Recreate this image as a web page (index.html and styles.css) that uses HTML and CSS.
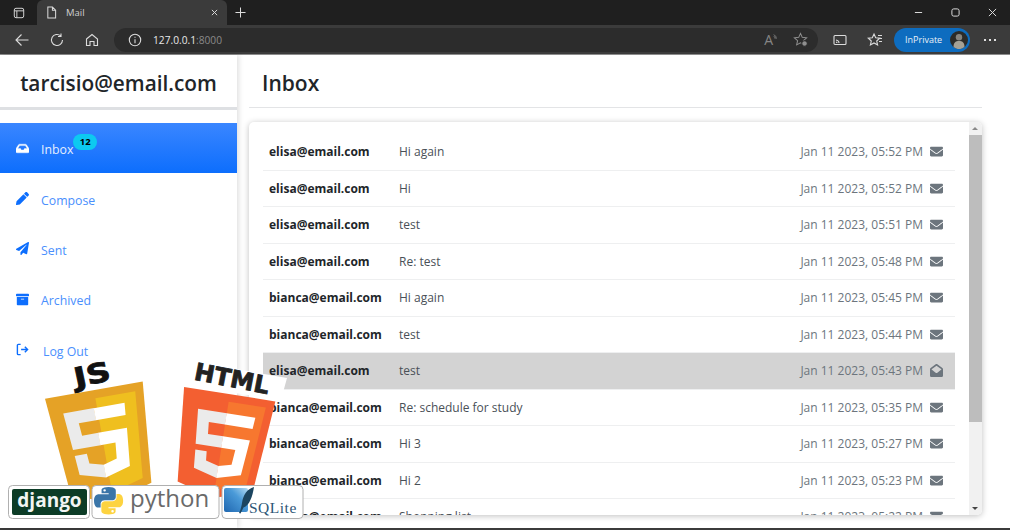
FILE: index.html
```html
<!DOCTYPE html>
<html lang="en">
<head>
    <meta charset="UTF-8">
    <title>Mail</title>
    <link rel="stylesheet" href="styles.css">
</head>
<body>
<div class="tabstrip">
    <svg class="ic tabs-ic" viewBox="0 0 14 14"><rect x="1.500" y="1.500" width="11" height="11" rx="2"/><path d="M1.500 4.500h11M4.500 4.500v8"/></svg>
    <div class="tab">
        <svg class="ic doc-ic" viewBox="0 0 12 14"><path d="M2 1h5l3.500 3.500V13H2zM7 1v3.500h3.500"/></svg>
        <span class="tab-title">Mail</span>
        <svg class="ic tab-x" viewBox="0 0 8 8"><path d="M1 1l6 6M7 1l-6 6"/></svg>
    </div>
    <svg class="ic new-tab" viewBox="0 0 12 12"><path d="M6 .5v11M.5 6h11"/></svg>
    <div class="window-btns">
        <svg class="ic" viewBox="0 0 10 10"><path d="M1 5h8"/></svg>
        <svg class="ic" viewBox="0 0 10 10"><rect x="1" y="1" width="8" height="8" rx="2"/></svg>
        <svg class="ic" viewBox="0 0 10 10"><path d="M1 1l8 8M9 1l-8 8"/></svg>
    </div>
</div>
<div class="toolbar">
    <svg class="ic nav-ic back" viewBox="0 0 14 14"><path d="M13.500 7H1M6.500 1.500L1 7l5.500 5.500"/></svg>
    <svg class="ic nav-ic reload" viewBox="0 0 14 14"><path d="M12.500 7a5.500 5.500 0 1 1-1.800-4.100M11 .5v3H8"/></svg>
    <svg class="ic nav-ic home" viewBox="0 0 14 14"><path d="M1.500 6L7 1.500 12.500 6v6.500H9V8.500H5v4H1.500z"/></svg>
    <div class="address">
        <svg class="ic info" viewBox="0 0 14 14"><circle cx="7" cy="7" r="5.700"/><path d="M7 6.200v4M7 3.800v1"/></svg>
        <span class="url">127.0.0.1<span class="port">:8000</span></span>
        <span class="read-a">A<svg class="ic read-waves" viewBox="0 0 6 8"><path d="M1 1q3 2 3 5M1 3q1.500 1 1.500 3"/></svg></span>
        <svg class="ic star-add" viewBox="0 0 16 16"><path d="M8 1.500l1.900 4.200 4.600.5-3.400 3 1 4.500L8 11.500l-4.100 2.200 1-4.500-3.400-3 4.600-.5z"/><circle class="fill-dim" cx="12.300" cy="12.300" r="3"/></svg>
    </div>
    <svg class="ic cast" viewBox="0 0 14 12"><rect x="1" y="1.500" width="12" height="9" rx="1"/><path d="M3 6q3 .5 3 3M3 8q1 .2 1 1"/></svg>
    <svg class="ic favs" viewBox="0 0 16 16"><path d="M7 2l1.700 3.800 4 .4-3 2.800.9 4-3.600-2.100-3.600 2.100.9-4-3-2.800 4-.4zM11 3.500h4M12.500 6.500h2.500M12 9.500h3"/></svg>
    <div class="inprivate">
        <span>InPrivate</span>
        <svg class="avatar" viewBox="0 0 18 18"><circle cx="9" cy="9" r="9" fill="#2b2b29"/><circle cx="9" cy="6.300" r="3.200" fill="#85847f"/><path d="M3.500 16c0-5 2.500-6 5.500-6s5.500 1 5.500 6a9 9 0 0 1-11 0z" fill="#a5a195"/></svg>
    </div>
    <div class="dots"><i></i><i></i><i></i></div>
</div>

<div class="app">
    <aside class="sidebar">
        <h2 class="account">tarcisio@email.com</h2>
        <nav class="menu">
            <a class="menu-item active">
                <svg class="menu-ic" viewBox="0 0 576 512"><path d="M567.938 243.908L462.250 85.374A48.003 48.003 0 0 0 422.311 64H153.689a48 48 0 0 0-39.938 21.374L8.062 243.908A47.994 47.994 0 0 0 0 270.533V400c0 26.510 21.490 48 48 48h480c26.510 0 48-21.490 48-48V270.533a47.994 47.994 0 0 0-8.062-26.625zM162.252 128h251.497l85.333 128H376l-32 64H232l-32-64H76.918l85.334-128z"/></svg>
                <span class="menu-label">Inbox</span>
                <span class="badge">12</span>
            </a>
            <a class="menu-item">
                <svg class="menu-ic" viewBox="0 0 512 512"><path d="M497.900 142.100l-46.100 46.100c-4.700 4.700-12.300 4.700-17 0l-111-111c-4.700-4.700-4.700-12.300 0-17l46.100-46.100c18.700-18.700 49.100-18.700 67.900 0l60.100 60.100c18.800 18.700 18.800 49.100 0 67.900zM284.200 99.800L21.600 362.400.4 483.900c-2.900 16.400 11.400 30.600 27.800 27.800l121.500-21.300 262.600-262.600c4.700-4.700 4.700-12.300 0-17l-111-111c-4.800-4.700-12.400-4.700-17.100 0z"/></svg>
                <span class="menu-label">Compose</span>
            </a>
            <a class="menu-item">
                <svg class="menu-ic" viewBox="0 0 512 512"><path d="M476 3.200L12.500 270.600c-18.100 10.400-15.800 35.600 2.200 43.200L121 358.400l287.300-253.200c5.500-4.900 13.300 2.600 8.600 8.300L176 407v80.500c0 23.600 28.500 32.900 42.500 15.800L282 426l124.600 52.200c14.200 6 30.400-2.900 33-18.200l72-432C515 7.800 493.300-6.800 476 3.200z"/></svg>
                <span class="menu-label">Sent</span>
            </a>
            <a class="menu-item">
                <svg class="menu-ic" viewBox="0 0 512 512"><path d="M32 448c0 17.700 14.300 32 32 32h384c17.700 0 32-14.300 32-32V160H32v288zm160-212c0-6.600 5.400-12 12-12h104c6.600 0 12 5.400 12 12v8c0 6.600-5.400 12-12 12H204c-6.600 0-12-5.400-12-12v-8zM480 32H32C14.300 32 0 46.300 0 64v48c0 8.800 7.200 16 16 16h480c8.800 0 16-7.200 16-16V64c0-17.700-14.300-32-32-32z"/></svg>
                <span class="menu-label">Archived</span>
            </a>
            <a class="menu-item">
                <svg class="menu-ic logout-ic" viewBox="0 0 14 14"><path d="M5 1.500H2.500a1 1 0 0 0-1 1v9a1 1 0 0 0 1 1H5M5.500 7h7M9.500 4l3 3-3 3"/></svg>
                <span class="menu-label logout-label">Log Out</span>
            </a>
        </nav>
    </aside>

    <main class="content">
        <h1 class="page-title">Inbox</h1>
        <section class="card">
            <div class="list">
                <div class="row"><b>elisa@email.com</b><span class="subject">Hi again</span><span class="date">Jan 11 2023, 05:52 PM</span><svg class="env" viewBox="0 0 512 512"><use href="#closed"/></svg></div>
                <div class="row"><b>elisa@email.com</b><span class="subject">Hi</span><span class="date">Jan 11 2023, 05:52 PM</span><svg class="env" viewBox="0 0 512 512"><use href="#closed"/></svg></div>
                <div class="row"><b>elisa@email.com</b><span class="subject">test</span><span class="date">Jan 11 2023, 05:51 PM</span><svg class="env" viewBox="0 0 512 512"><use href="#closed"/></svg></div>
                <div class="row"><b>elisa@email.com</b><span class="subject">Re: test</span><span class="date">Jan 11 2023, 05:48 PM</span><svg class="env" viewBox="0 0 512 512"><use href="#closed"/></svg></div>
                <div class="row"><b>bianca@email.com</b><span class="subject">Hi again</span><span class="date">Jan 11 2023, 05:45 PM</span><svg class="env" viewBox="0 0 512 512"><use href="#closed"/></svg></div>
                <div class="row"><b>bianca@email.com</b><span class="subject">test</span><span class="date">Jan 11 2023, 05:44 PM</span><svg class="env" viewBox="0 0 512 512"><use href="#closed"/></svg></div>
                <div class="row read"><b>elisa@email.com</b><span class="subject">test</span><span class="date">Jan 11 2023, 05:43 PM</span><svg class="env" viewBox="0 0 512 512"><path fill-rule="evenodd" d="M256 0c-12 0-24 4-33 11L26 157C10 169 0 188 0 208V448c0 35 29 64 64 64H448c35 0 64-29 64-64V208c0-20-10-39-26-51L289 11C280 4 268 0 256 0zM64 208L256 66 448 208v10L290 343c-20 15-48 15-68 0L64 218z"/></svg></div>
                <div class="row"><b>bianca@email.com</b><span class="subject">Re: schedule for study</span><span class="date">Jan 11 2023, 05:35 PM</span><svg class="env" viewBox="0 0 512 512"><use href="#closed"/></svg></div>
                <div class="row"><b>bianca@email.com</b><span class="subject">Hi 3</span><span class="date">Jan 11 2023, 05:27 PM</span><svg class="env" viewBox="0 0 512 512"><use href="#closed"/></svg></div>
                <div class="row"><b>bianca@email.com</b><span class="subject">Hi 2</span><span class="date">Jan 11 2023, 05:23 PM</span><svg class="env" viewBox="0 0 512 512"><use href="#closed"/></svg></div>
                <div class="row"><b>bianca@email.com</b><span class="subject">Shopping list</span><span class="date">Jan 11 2023, 05:22 PM</span><svg class="env" viewBox="0 0 512 512"><use href="#closed"/></svg></div>
            </div>
            <div class="scrollbar">
                <i class="arrow up"></i>
                <div class="track"><div class="thumb"></div></div>
                <i class="arrow down"></i>
            </div>
        </section>
    </main>
</div>
<div class="bottom-line"></div>

<svg class="defs" width="0" height="0"><defs>
    <path id="closed" d="M502.300 190.800c3.900-3.100 9.700-.2 9.700 4.700V400c0 26.500-21.500 48-48 48H48c-26.500 0-48-21.500-48-48V195.600c0-5 5.700-7.800 9.700-4.700 22.400 17.400 52.100 39.500 154.100 113.600 21.100 15.400 56.700 47.800 92.200 47.600 35.700.3 72-32.800 92.300-47.600 102-74.100 131.600-96.300 154-113.700zM256 320c23.200.4 56.600-29.200 73.400-41.400 132.700-96.300 142.800-104.700 173.400-128.700 5.800-4.500 9.200-11.500 9.200-18.900v-19c0-26.500-21.500-48-48-48H48C21.500 64 0 85.500 0 112v19c0 7.400 3.400 14.300 9.200 18.900 30.600 23.900 40.700 32.400 173.400 128.700 16.800 12.200 50.200 41.800 73.400 41.400z"/>
    <path id="snake" d="M54.900 0C26.800 0 28.600 12.200 28.600 12.200V24.800H55.400V28.600H18C18 28.600 0 26.600 0 54.900S15.700 82.200 15.700 82.200H25V69.100S24.500 53.400 40.500 53.400H67.300S82.300 53.600 82.300 38.900V14.600S84.600 0 54.900 0ZM40 8.500A4.800 4.800 0 1 1 40 18.100 4.800 4.800 0 0 1 40 8.500Z"/>
    <linearGradient id="sq-blue" x1="0" y1="1" x2="1" y2="0">
        <stop offset="0" stop-color="#1f67b0"/>
        <stop offset=".6" stop-color="#4a9ad8"/>
        <stop offset="1" stop-color="#b5dcf4"/>
    </linearGradient>
</defs></svg>

<!-- stack logos laid over the page -->
<svg class="logos" viewBox="0 0 310 180">
    <polygon fill="#fff" points="197,12 287,28 281,50 183,35"/>
    <text class="js-word" transform="translate(92 24) rotate(-12) scale(1.25 1)" text-anchor="middle" y="10">JS</text>
    <text class="html-word" transform="translate(232 28) rotate(11)" text-anchor="middle" y="9">HTML</text>
    <g transform="translate(38.500 50) rotate(-10) scale(.22)">
        <path fill="#e5a226" d="M71 460L30 0h451l-41 460-185 52z"/>
        <path fill="#efbf1f" d="M256 472l149-41 35-394H256z"/>
        <path fill="#ebebeb" d="M256 208h-75l-5-58h80V94H114l15 171h127zM256 355l-64-17-4-45h-56l7 89 117 32z" transform="translate(-14 -14)"/>
        <path fill="#fff" d="M255 208v57h70l-7 73-63 17v59l116-32 17-174zM255 94v56h137l5-56z" transform="translate(-14 -14)"/>
    </g>
    <g transform="translate(178 36) rotate(9) scale(.205)">
        <path fill="#f35f31" d="M71 460L30 0h451l-41 460-185 52z"/>
        <path fill="#f7772f" d="M256 472l149-41 35-394H256z"/>
        <path fill="#ebebeb" d="M256 208h-75l-5-58h80V94H114l15 171h127zM256 355l-64-17-4-45h-56l7 89 117 32z"/>
        <path fill="#fff" d="M255 208v57h70l-7 73-63 17v59l116-32 17-174zM255 94v56h137l5-56z"/>
    </g>
    <rect class="badge-box" x="8.500" y="135.500" width="81" height="33" rx="4"/>
    <rect fill="#0c3c26" x="12" y="139" width="75" height="26" rx="2"/>
    <text class="django" x="49.500" y="157" text-anchor="middle">django</text>
    <rect class="badge-box" x="92" y="135.500" width="127" height="33" rx="4"/>
    <g transform="translate(94 137) scale(.265 .25)">
        <use href="#snake" fill="#3a75a8"/>
        <use href="#snake" fill="#fdd340" transform="rotate(180 55 55)"/>
    </g>
    <text class="python" x="130" y="157">python</text>
    <rect class="badge-box" x="222" y="135.500" width="81" height="33" rx="4"/>
    <rect fill="url(#sq-blue)" x="224" y="138" width="24" height="24" rx="2"/>
    <path fill="#1c4560" d="M254 137c-7 2-11 8-12 16-.5 3-1 6-3 10l1.500.5c1-2 2-4 3-6 6-2 9-11 10.500-20.500z"/>
    <text class="sqlite" x="249" y="163">SQLite</text>
</svg>
</body>
</html>
```

FILE: styles.css
```css
*{
    margin: 0;
    padding: 0;
    box-sizing: border-box;
}
html,body{
    width: 1010px;
    height: 530px;
    overflow: hidden;
}
body{
    position: relative;
    font-family: "Open Sans", "Noto Sans", sans-serif;
    background: #fff;
}
.ic{
    display: block;
    fill: none;
    stroke: #dcdcdc;
    stroke-width: 1.100;
    flex: none;
}

/* browser top */
.tabstrip{
    display: flex;
    align-items: center;
    height: 25px;
    background: #1f1f1f;
    padding-left: 13px;
}
.tabs-ic{
    width: 12px;
    height: 12px;
}
.tab{
    display: flex;
    align-items: center;
    width: 190px;
    height: 25px;
    margin-left: 12px;
    padding: 0 9px;
    background: #3b3b3b;
    border-radius: 6px 6px 0 0;
}
.doc-ic{
    width: 11px;
    height: 13px;
}
.tab-title{
    margin-left: 9px;
    font-size: 9.500px;
    color: #d0d0d0;
}
.tab-x{
    width: 7px;
    height: 7px;
    margin-left: auto;
}
.new-tab{
    width: 11px;
    height: 11px;
    margin-left: 8px;
}
.window-btns{
    display: flex;
    align-items: center;
    gap: 28px;
    margin-left: auto;
    padding-right: 13px;
}
.window-btns .ic{
    width: 9px;
    height: 9px;
}
.toolbar{
    display: flex;
    align-items: center;
    height: 30px;
    background: #3b3b3b;
    padding-left: 15px;
    border-bottom: 1px solid #8c8c8c;
}
.nav-ic{
    width: 14px;
    height: 14px;
}
.reload{
    margin-left: 21px;
}
.home{
    margin-left: 21px;
}
.address{
    display: flex;
    align-items: center;
    width: 704px;
    height: 24px;
    margin-left: 15px;
    padding-left: 14px;
    background: #2c2c2c;
    border-radius: 12px;
}
.info{
    width: 14px;
    height: 14px;
}
.url{
    margin-left: 11px;
    font-size: 10.200px;
    color: #e8e8e8;
}
.port{
    color: #8a8a8a;
}
.read-a{
    display: flex;
    margin-left: auto;
    font-size: 14px;
    line-height: 18px;
    color: #858585;
}
.read-waves{
    width: 5px;
    height: 8px;
    margin-top: 2px;
    stroke: #858585;
}
.star-add{
    width: 15px;
    height: 15px;
    margin: 0 10px 0 15px;
    stroke: #8f8f8f;
}
.fill-dim{
    fill: #8f8f8f;
    stroke: #2c2c2c;
}
.cast{
    width: 14px;
    height: 12px;
    margin-left: 15px;
}
.favs{
    width: 16px;
    height: 16px;
    margin-left: 20px;
}
.inprivate{
    display: flex;
    align-items: center;
    justify-content: space-between;
    width: 76px;
    height: 24px;
    margin-left: 11px;
    padding: 0 2px 0 11px;
    background: #0d6cbf;
    border-radius: 12px;
    font-size: 9px;
    color: #e8f0f8;
}
.avatar{
    width: 18px;
    height: 18px;
}
.dots{
    display: flex;
    gap: 3px;
    margin-left: 14px;
}
.dots i{
    width: 2px;
    height: 2px;
    background: #e0e0e0;
}

/* page */
.app{
    display: flex;
    height: 473px;
}
.sidebar{
    flex: none;
    width: 237px;
    box-shadow: 2px 0 5px rgba(0,0,0,.12);
}
.account{
    height: 55px;
    padding-top: 13px;
    border-bottom: 3px solid #dee0e3;
    font-size: 20.800px;
    font-weight: 600;
    line-height: 30px;
    text-align: center;
    color: #212529;
}
.menu{
    margin-top: 13px;
}
.menu-item{
    display: flex;
    align-items: center;
    height: 50.400px;
    padding: 3px 0 0 16px;
    font-size: 12.300px;
    color: #4a8ffd;
}
.menu-item.active{
    background: linear-gradient(#3a86ff,#0d6efd);
    color: #e6efff;
}
.menu-ic{
    flex: none;
    width: 13px;
    height: 13px;
    margin-top: -3px;
    fill: #0d6efd;
}
.active .menu-ic{
    fill: #fff;
    stroke: #fff;
    stroke-width: 16;
}
.logout-ic{
    fill: none;
    stroke: #0d6efd;
    stroke-width: 1.500;
}
.menu-label{
    margin-left: 12px;
}
.logout-label{
    margin-left: 14px;
}
.badge{
    align-self: flex-start;
    margin: 8px 0 0 0;
    padding: 0 6.500px;
    background: #0dcaf0;
    border-radius: 9px;
    font-size: 9.500px;
    font-weight: 700;
    line-height: 16px;
    color: #000;
}
.content{
    flex: 1;
    padding: 0 28px 0 12px;
}
.page-title{
    height: 53px;
    padding: 13px 0 0 13px;
    border-bottom: 1px solid #e3e4e6;
    font-size: 21px;
    font-weight: 600;
    line-height: 30px;
    color: #212529;
}
.card{
    display: flex;
    height: 393px;
    margin-top: 14px;
    background: #fff;
    border-radius: 5px;
    box-shadow: 0 1px 6px rgba(0,0,0,.25);
    overflow: hidden;
}
.list{
    flex: 1;
    padding: 12px 14px 0;
    overflow: hidden;
}
.row{
    display: flex;
    align-items: center;
    height: 36.500px;
    padding-left: 6px;
    padding-right: 12px;
    border-bottom: 1px solid #eeeff0;
    font-size: 12px;
    color: #6c757d;
}
.row b{
    flex: none;
    width: 130px;
    color: #212529;
}
.row.read{
    background: #d3d3d3;
}
.subject{
    color: #495057;
}
.date{
    margin-left: auto;
}
.env{
    width: 13px;
    height: 13px;
    margin-left: 7px;
    fill: #6c757d;
}
.scrollbar{
    display: flex;
    flex-direction: column;
    flex: none;
    width: 13px;
    background: #f1f1f1;
}
.arrow{
    flex: none;
    height: 13px;
    position: relative;
}
.arrow:after{
    content: "";
    position: absolute;
    left: 3px;
    top: 5px;
    border: 3px solid transparent;
}
.arrow.up:after{
    top: 2px;
    border-bottom: 3px solid #8a8a8a;
}
.arrow.down:after{
    top: 5px;
    border-top: 3px solid #444;
}
.track{
    flex: 1;
}
.thumb{
    height: 287px;
    background: #bdbdbd;
}
.bottom-line{
    height: 2px;
    background: #3b3b3b;
}
.defs{
    position: absolute;
}

/* logos */
.logos{
    position: absolute;
    left: 0;
    top: 350px;
    width: 310px;
    height: 180px;
    pointer-events: none;
}
.js-word{
    font: 700 27px "DejaVu Sans", sans-serif;
    fill: #111;
    stroke: #111;
    stroke-width: .8;
}
.html-word{
    font: 700 24px "DejaVu Sans", sans-serif;
    fill: #222;
    stroke: #222;
    stroke-width: .8;
}
.badge-box{
    fill: #fff;
    stroke: #b0b0b0;
    stroke-width: 1;
}
.django{
    font: 700 19px "Open Sans", sans-serif;
    fill: #f2f5f3;
}
.python{
    font: 400 24px "Open Sans", sans-serif;
    fill: #6a6a6a;
}
.sqlite{
    font: 400 15.500px "Liberation Serif", serif;
    letter-spacing: .5px;
    fill: #2c5575;
}
```
